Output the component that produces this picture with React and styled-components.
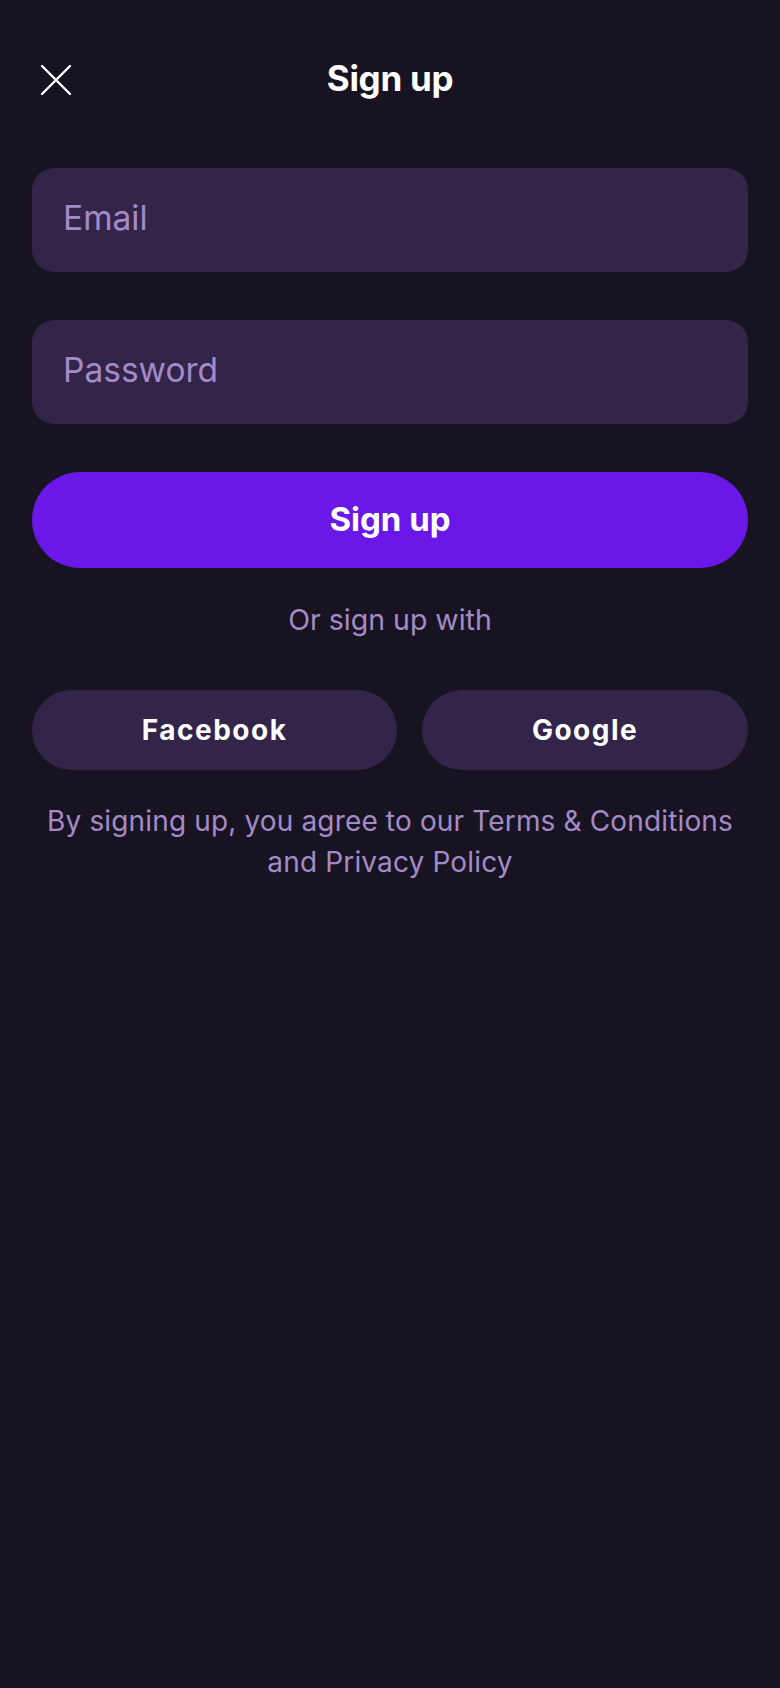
import React from 'react';
import styled, { createGlobalStyle } from 'styled-components';

const GlobalStyle = createGlobalStyle`
  html, body {
    margin: 0;
    padding: 0;
    background: #181320;
  }
  body {
    font-family: Inter, "Noto Sans", "Liberation Sans", sans-serif;
    -webkit-font-smoothing: antialiased;
  }
  * {
    box-sizing: border-box;
  }
`;

const Screen = styled.div`
  min-height: 1688px;
  background: #181320;
  padding: 38px 32px 0;
  display: flex;
  flex-direction: column;
`;

const Header = styled.header`
  display: grid;
  grid-template-columns: 1fr auto 1fr;
  align-items: center;
  height: 80px;
  margin-bottom: 50px;
`;

const CloseButton = styled.button`
  justify-self: start;
  display: flex;
  align-items: center;
  justify-content: center;
  width: 30px;
  height: 30px;
  margin: 4px 0 0 9px;
  padding: 0;
  border: none;
  background: none;
  cursor: pointer;
`;

const Title = styled.h1`
  margin: 0;
  font-size: 35px;
  font-weight: 700;
  color: #ffffff;
  letter-spacing: -0.3px;
`;

const Form = styled.form`
  display: flex;
  flex-direction: column;
  gap: 48px;
`;

const Field = styled.input`
  width: 100%;
  height: 104px;
  padding: 0 31px 4px;
  border: none;
  border-radius: 22px;
  background: #33244a;
  font-family: inherit;
  font-size: 33.5px;
  color: #ffffff;
  outline: none;
  &::placeholder {
    color: #a48bc8;
  }
`;

const PrimaryButton = styled.button`
  height: 96px;
  padding: 0 0 3px;
  border: none;
  border-radius: 48px;
  background: #6a18e7;
  color: #ffffff;
  font-family: inherit;
  font-size: 33px;
  font-weight: 700;
  cursor: pointer;
`;

const Divider = styled.p`
  margin: 32px 0 50px;
  text-align: center;
  font-size: 28.5px;
  line-height: 40px;
  color: #a48bc8;
`;

const SocialRow = styled.div`
  display: flex;
  gap: 25px;
`;

const SocialButton = styled.button`
  flex: 1 1 auto;
  height: 80px;
  border: none;
  border-radius: 40px;
  background: #33244a;
  color: #ffffff;
  font-family: inherit;
  font-size: 28px;
  font-weight: 700;
  letter-spacing: 1.5px;
  cursor: pointer;
`;

const Legal = styled.p`
  margin: 31px 0 0;
  text-align: center;
  font-size: 28px;
  line-height: 41px;
  letter-spacing: 0.15px;
  color: #a48bc8;
`;

function CloseIcon() {
  return (
    <svg width="30" height="30" viewBox="0 0 30 30" fill="none">
      <path d="M1 1L29 29M29 1L1 29" stroke="#ffffff" strokeWidth="2.4" strokeLinecap="round" />
    </svg>
  );
}

export default function App() {
  return (
    <>
      <GlobalStyle />
      <Screen>
        <Header>
          <CloseButton aria-label="Close">
            <CloseIcon />
          </CloseButton>
          <Title>Sign up</Title>
          <span />
        </Header>
        <Form onSubmit={e => e.preventDefault()}>
          <Field type="email" placeholder="Email" />
          <Field type="password" placeholder="Password" />
          <PrimaryButton type="submit">Sign up</PrimaryButton>
        </Form>
        <Divider>Or sign up with</Divider>
        <SocialRow>
          <SocialButton>Facebook</SocialButton>
          <SocialButton>Google</SocialButton>
        </SocialRow>
        <Legal>
          By signing up, you agree to our Terms &amp; Conditions
          <br />
          and Privacy Policy
        </Legal>
      </Screen>
    </>
  );
}
